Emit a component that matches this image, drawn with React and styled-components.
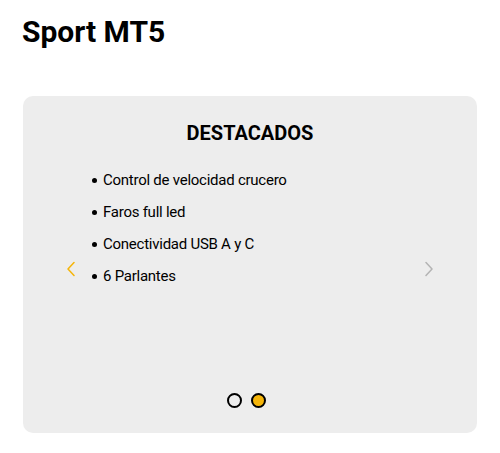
import styled, { createGlobalStyle } from "styled-components";

const GlobalStyle = createGlobalStyle`
  body {
    margin: 0;
    background: #ffffff;
    font-family: Roboto, "Liberation Sans", sans-serif;
    color: #000000;
  }
`;

const Page = styled.div`
  padding: 14px 23px 0 23px;
`;

const Title = styled.h1`
  font-size: 30px;
  font-weight: 700;
  margin: 0 0 46px -1px;
  line-height: 36px;
`;

const Card = styled.section`
  background: #ededed;
  border-radius: 10px;
  height: 337px;
  display: flex;
  align-items: stretch;
  padding: 0 44px;
  box-sizing: border-box;
`;

const Slide = styled.div`
  flex: 1;
  display: flex;
  flex-direction: column;
  align-items: center;
  padding-top: 22px;
`;

const Heading = styled.h2`
  font-size: 20px;
  font-weight: 700;
  margin: 0;
  line-height: 30px;
`;

const Arrow = styled.button`
  background: none;
  border: 0;
  padding: 0;
  width: 8px;
  height: 16px;
  align-self: center;
  margin-top: 9px;
  display: flex;
  align-items: center;
  justify-content: center;
  color: ${(p) => (p.$active ? "#f5b50a" : "#b4b4b4")};
  cursor: pointer;
`;

const List = styled.ul`
  align-self: stretch;
  margin: 16px 0 0 0;
  padding: 0 0 0 17px;
  list-style: none;
`;

const Item = styled.li`
  font-size: 15px;
  letter-spacing: -0.25px;
  line-height: 32px;
  display: flex;
  align-items: center;

  &::before {
    content: "";
    width: 5px;
    height: 5px;
    border-radius: 50%;
    background: #000;
    margin-right: 6px;
  }
`;

const Dots = styled.div`
  display: flex;
  margin-top: auto;
  margin-bottom: 25px;
  padding-left: 1px;
`;

const Dot = styled.span`
  width: 15px;
  height: 15px;
  margin-right: 9px;
  box-sizing: border-box;
  border-radius: 50%;
  border: 2px solid #000;
  background: ${(p) => (p.$active ? "#f5b50a" : "transparent")};
`;

function Chevron({ dir }) {
  const d = dir === "left" ? "M7 1.5 L1 8 L7 14.5" : "M1 1.5 L7 8 L1 14.5";
  return (
    <svg width="8" height="16" viewBox="0 0 8 16" fill="none">
      <path d={d} stroke="currentColor" strokeWidth="1.5" strokeLinecap="round" strokeLinejoin="round" />
    </svg>
  );
}

const features = [
  "Control de velocidad crucero",
  "Faros full led",
  "Conectividad USB A y C",
  "6 Parlantes",
];

export default function App() {
  return (
    <Page>
      <GlobalStyle />
      <Title>Sport MT5</Title>
      <Card>
        <Arrow $active aria-label="anterior">
          <Chevron dir="left" />
        </Arrow>
        <Slide>
          <Heading>DESTACADOS</Heading>
          <List>
            {features.map((f) => (
              <Item key={f}>{f}</Item>
            ))}
          </List>
          <Dots>
            <Dot />
            <Dot $active />
          </Dots>
        </Slide>
        <Arrow aria-label="siguiente">
          <Chevron dir="right" />
        </Arrow>
      </Card>
    </Page>
  );
}
